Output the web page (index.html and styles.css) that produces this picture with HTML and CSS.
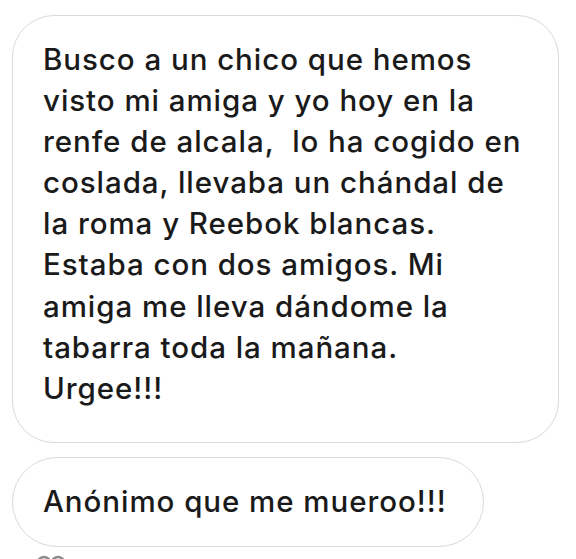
FILE: index.html
```html
<!DOCTYPE html>
<html lang="es">
<head>
<meta charset="utf-8">
<link rel="stylesheet" href="styles.css">
</head>
<body>
<div class="thread">
  <div class="bubble bubble-main">
    <p class="msg">Busco a un chico que hemos<br>visto mi amiga y yo hoy en la<br>renfe de alcala,&nbsp; lo ha cogido en<br>coslada, llevaba un chándal de<br>la roma y Reebok blancas.<br>Estaba con dos amigos. Mi<br>amiga me lleva dándome la<br>tabarra toda la mañana.<br>Urgee!!!</p>
  </div>
  <div class="bubble bubble-pill">
    <p class="msg">Anónimo que me mueroo!!!</p>
  </div>
  <div class="reaction">
    <svg width="28" height="14" viewBox="0 0 28 14"><circle cx="7" cy="8" r="6" fill="none" stroke="#8c8c8c" stroke-width="2.5"/><circle cx="21" cy="8" r="6" fill="none" stroke="#8c8c8c" stroke-width="2.5"/></svg>
  </div>
</div>
</body>
</html>
```
FILE: styles.css
```css
html, body {
  margin: 0;
  padding: 0;
  background: #ffffff;
}
body {
  width: 576px;
  height: 559px;
  overflow: hidden;
  font-family: Inter, Roboto, "Liberation Sans", sans-serif;
  color: #1a1a1a;
}
.thread {
  display: flex;
  flex-direction: column;
  align-items: flex-start;
  gap: 14px;
  padding: 15px 0 0 12px;
}
.bubble {
  box-sizing: border-box;
  border: 1.5px solid #dadada;
  background: #fff;
}
.bubble-main {
  width: 547px;
  height: 428px;
  border-radius: 42px;
  padding: 23px 10px 0 30px;
}
.bubble-pill {
  width: 472px;
  height: 90px;
  border-radius: 45px;
  padding: 0 10px 0 30px;
  display: flex;
  align-items: center;
}
.msg {
  margin: 0;
  font-size: 29.5px;
  font-weight: 500;
  line-height: 41.1px;
  letter-spacing: 0.95px;
  white-space: nowrap;
}
.reaction {
  margin: -6px 0 0 25px;
  height: 14px;
}
.reaction svg {
  display: block;
}
```
